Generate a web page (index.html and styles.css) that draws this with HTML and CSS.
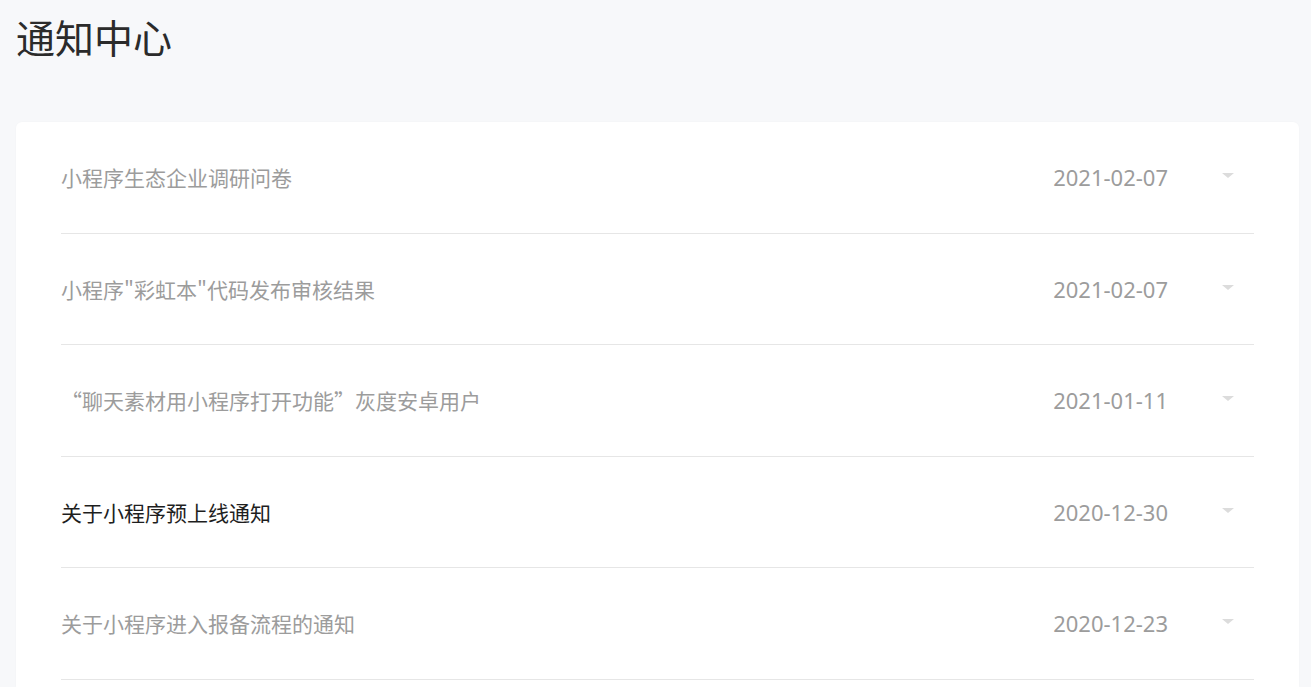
FILE: index.html
```html
<!DOCTYPE html>
<html lang="zh-CN">
<head>
<meta charset="utf-8">
<title>通知中心</title>
<link rel="stylesheet" href="styles.css">
</head>
<body>
<div class="page">
  <h1 class="title">通知中心</h1>
  <div class="card">
    <ul class="list">
      <li class="item"><span class="name">小程序生态企业调研问卷</span><span class="date">2021-02-07</span><span class="caret"></span></li>
      <li class="item"><span class="name">小程序"彩虹本"代码发布审核结果</span><span class="date">2021-02-07</span><span class="caret"></span></li>
      <li class="item"><span class="name">“聊天素材用小程序打开功能”灰度安卓用户</span><span class="date">2021-01-11</span><span class="caret"></span></li>
      <li class="item unread"><span class="name">关于小程序预上线通知</span><span class="date">2020-12-30</span><span class="caret"></span></li>
      <li class="item"><span class="name">关于小程序进入报备流程的通知</span><span class="date">2020-12-23</span><span class="caret"></span></li>
    </ul>
  </div>
</div>
</body>
</html>
```

FILE: styles.css
```css
html, body {
  margin: 0;
  padding: 0;
  background: #f7f8fa;
  font-family: "Noto Sans CJK SC", "Noto Sans", sans-serif;
}
.page {
  padding: 0 12px 0 16px;
}
.title {
  margin: 0;
  padding-top: 8px;
  height: 122px;
  box-sizing: border-box;
  font-size: 39px;
  font-weight: 400;
  line-height: 56px;
  color: #2b2b2b;
}
.card {
  background: #fff;
  border-radius: 6px 6px 0 0;
  padding: 0 45px 7px;
  box-shadow: 0 0 2px rgba(0,0,0,0.03);
}
.list {
  list-style: none;
  margin: 0;
  padding: 0;
}
.item {
  display: flex;
  align-items: center;
  height: 111.5px;
  box-sizing: border-box;
  border-bottom: 1px solid #e6e6e6;
  color: #9c9c9c;
  font-size: 21px;
}
.item.unread {
  color: #1e1e1e;
}
.name {
  flex: 1;
}
.date {
  color: #9c9c9c;
  font-family: "Noto Sans", sans-serif;
  font-size: 22px;
  margin-right: 54px;
}
.caret {
  width: 0;
  height: 0;
  border-left: 6px solid transparent;
  border-right: 6px solid transparent;
  border-top: 5px solid #dcdcdc;
  margin-right: 20px;
  align-self: flex-start;
  margin-top: 51px;
}
```
